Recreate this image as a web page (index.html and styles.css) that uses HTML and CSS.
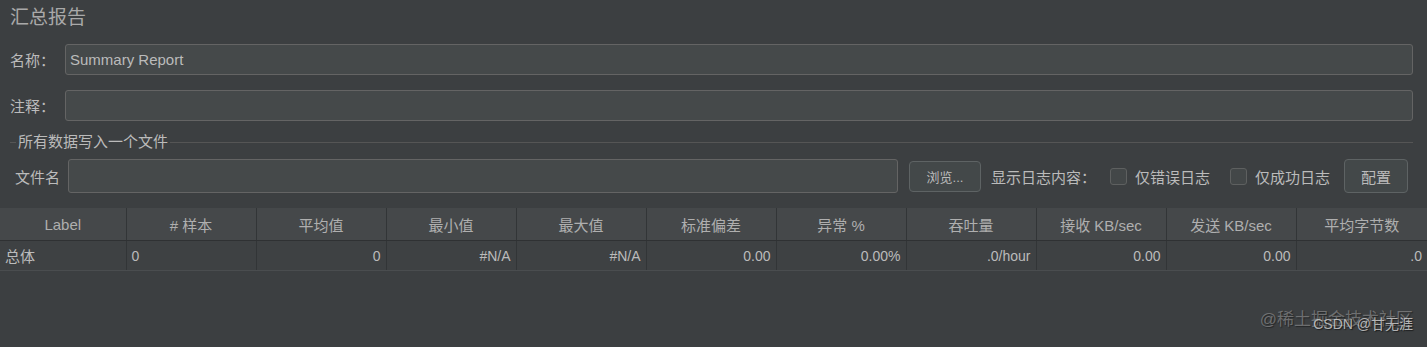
FILE: index.html
```html
<!DOCTYPE html>
<html lang="zh-CN">
<head>
    <meta charset="UTF-8">
    <title>汇总报告</title>
    <link rel="stylesheet" href="styles.css">
</head>
<body>
    <div class="panel">
        <h1 class="title">汇总报告</h1>
        <div class="field-row">
            <label class="field-label">名称：</label>
            <div class="text-box">Summary Report</div>
        </div>
        <div class="field-row">
            <label class="field-label">注释：</label>
            <div class="text-box"></div>
        </div>
        <div class="group">
            <div class="group-title"><span>所有数据写入一个文件</span></div>
            <div class="file-row">
                <label class="file-label">文件名</label>
                <div class="text-box file-box"></div>
                <button class="btn browse">浏览...</button>
                <span class="log-label">显示日志内容：</span>
                <span class="check"><i class="box"></i>仅错误日志</span>
                <span class="check"><i class="box"></i>仅成功日志</span>
                <button class="btn config">配置</button>
            </div>
        </div>
    </div>

    <table class="report">
        <colgroup>
            <col class="col-first">
            <col span="9" class="col">
            <col class="col-last">
        </colgroup>
        <thead>
            <tr>
                <th>Label</th>
                <th># 样本</th>
                <th>平均值</th>
                <th>最小值</th>
                <th>最大值</th>
                <th>标准偏差</th>
                <th>异常 %</th>
                <th>吞吐量</th>
                <th>接收 KB/sec</th>
                <th>发送 KB/sec</th>
                <th>平均字节数</th>
            </tr>
        </thead>
        <tbody>
            <tr>
                <td class="left zh">总体</td>
                <td class="left">0</td>
                <td>0</td>
                <td>#N/A</td>
                <td>#N/A</td>
                <td>0.00</td>
                <td>0.00%</td>
                <td>.0/hour</td>
                <td>0.00</td>
                <td>0.00</td>
                <td>.0</td>
            </tr>
        </tbody>
    </table>

    <div class="watermark">
        <span class="wm-main">@稀土掘金技术社区</span>
        <span class="wm-sub">CSDN @甘无涯</span>
    </div>
</body>
</html>
```

FILE: styles.css
```css
body {
    margin: 0;
    background-color: #3c3f41;
    color: #bbbbbb;
    font-family: "Liberation Sans", "Noto Sans CJK SC", sans-serif;
    font-size: 15px;
    width: 1427px;
    height: 347px;
    overflow: hidden;
    position: relative;
}
.panel {
    padding: 0 14px 0 10px;
}
.title {
    margin: 0;
    padding-top: 5px;
    height: 44px;
    box-sizing: border-box;
    font-size: 19px;
    font-weight: normal;
    color: #a9a9a9;
    line-height: 26px;
}
.field-row {
    display: flex;
    align-items: center;
    height: 31px;
    margin-bottom: 15px;
}
.field-row + .field-row {
    margin-bottom: 0;
}
.field-label {
    width: 55px;
    flex: none;
}
.text-box {
    flex: 1;
    height: 31px;
    box-sizing: border-box;
    background-color: #45494a;
    border: 1px solid #646464;
    border-radius: 3px;
    padding: 0 4px;
    line-height: 29px;
    color: #bbbbbb;
}
.group {
    margin-top: 11px;
}
.group-title {
    display: flex;
    align-items: center;
    height: 20px;
    line-height: 20px;
}
.group-title::before {
    content: "";
    width: 6px;
    border-top: 1px solid #555555;
}
.group-title::after {
    content: "";
    flex: 1;
    border-top: 1px solid #555555;
}
.group-title span {
    padding: 0 2px;
}
.file-row {
    display: flex;
    align-items: center;
    margin-top: 7px;
    height: 34px;
}
.file-label {
    width: 53px;
    padding-left: 5px;
    flex: none;
}
.file-box {
    flex: none;
    width: 830px;
    height: 34px;
}
.btn {
    font-family: inherit;
    color: #bbbbbb;
    background-color: #434849;
    border: 1px solid #5e6364;
    border-radius: 4px;
    cursor: pointer;
    padding: 0;
}
.browse {
    margin-left: 11px;
    width: 72px;
    height: 31px;
    font-size: 13px;
}
.log-label {
    margin-left: 10px;
    margin-right: 4px;
}
.check {
    display: flex;
    align-items: center;
    margin-left: 10px;
}
.check + .check {
    margin-left: 20px;
}
.box {
    width: 17px;
    height: 17px;
    box-sizing: border-box;
    border: 1px solid #5e6060;
    border-radius: 3px;
    background-color: #434748;
    margin-right: 8px;
}
.config {
    margin-left: 14px;
    width: 64px;
    height: 34px;
    font-size: 15px;
}
.report {
    margin-top: 15px;
    border-collapse: collapse;
    table-layout: fixed;
    width: 1427px;
    font-size: 14px;
}
.col-first {
    width: 126px;
}
.col {
    width: 130px;
}
.col-last {
    width: 131px;
}
.report th,
.report td {
    padding: 0 5px;
    font-weight: normal;
    border-left: 1px solid #323537;
    white-space: nowrap;
    overflow: hidden;
}
.report th:first-child,
.report td:first-child {
    border-left: none;
}
.report th {
    height: 32px;
    font-size: 15px;
    color: #afafaf;
    background-color: #45484a;
    text-align: center;
    border-bottom: 1px solid #2f3133;
}
.report td {
    height: 29px;
    text-align: right;
    background-color: #3e4143;
    border-bottom: 1px solid #4a4d4f;
}
.report td.left {
    text-align: left;
}
.report td.zh {
    font-size: 15px;
}
.watermark {
    position: absolute;
    right: 14px;
    bottom: 12px;
    width: 180px;
    height: 30px;
}
.wm-main {
    position: absolute;
    right: 0;
    top: 0;
    font-size: 17px;
    color: rgba(150, 150, 150, 0.6);
    text-shadow: 1px 1px 1px rgba(0, 0, 0, 0.4);
    white-space: nowrap;
}
.wm-sub {
    position: absolute;
    right: 0;
    top: 8px;
    font-size: 14px;
    color: rgba(215, 215, 215, 0.8);
    text-shadow: 1px 1px 1px rgba(0, 0, 0, 0.5);
    white-space: nowrap;
}
```
